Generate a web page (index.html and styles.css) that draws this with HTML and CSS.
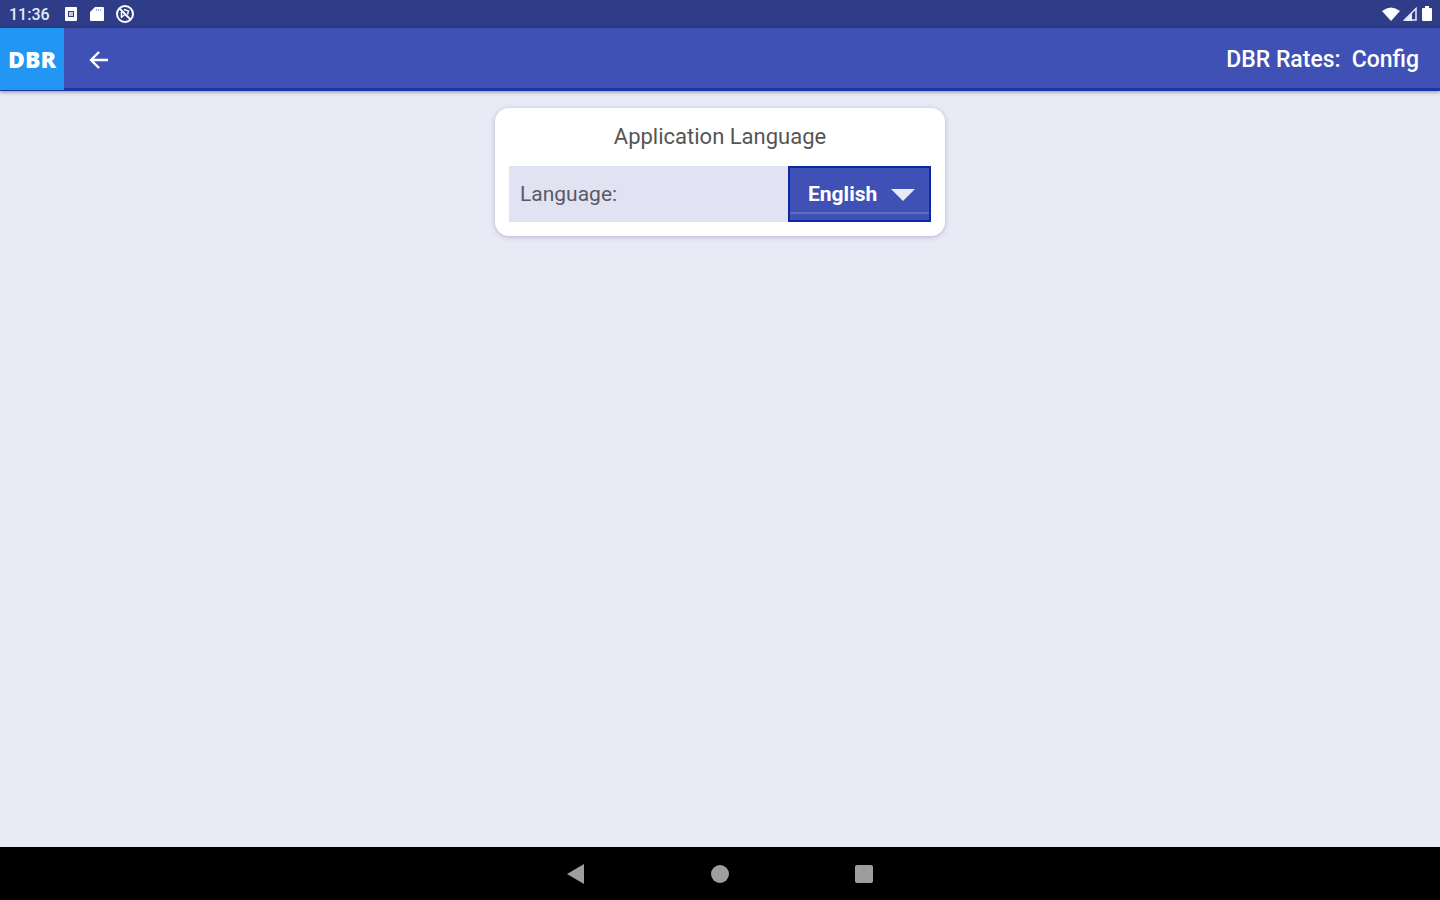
FILE: index.html
```html
<!DOCTYPE html>
<html lang="en">
<head>
    <meta charset="UTF-8">
    <meta name="viewport" content="width=device-width, initial-scale=1.0">
    <title>DBR Rates: Config</title>
    <link rel="stylesheet" href="styles.css">
</head>
<body>
    <div class="statusbar">
        <span class="clock">11:36</span>
        <div class="notifications">
            <svg width="14" height="16" viewBox="0 0 14 16"><path fill="#fff" fill-rule="evenodd" d="M2 1h10q1 0 1 1v12q0 1-1 1H2q-1 0-1-1V2q0-1 1-1zM4 5v6h6V5z"/><path fill="#c5cae9" d="M5 6h4v4H5z"/></svg>
            <svg width="14" height="16" viewBox="0 0 14 16"><path fill="#fff" d="M5 1h8q1 0 1 1v12q0 1-1 1H1q-1 0-1-1V6z"/><path stroke="#9fa8da" d="M6.500 3v2M8.500 3v2M10.500 3v2"/></svg>
            <svg width="18" height="18" viewBox="0 0 18 18" fill="none" stroke="#fff"><circle cx="9" cy="9" r="8" stroke-width="2"/><path stroke-width="2" d="M3.500 3.500l11 11"/><path stroke-width="1.500" d="M5.500 7v6M5.500 12l3-2M8 4.500l4.500 1.500-1 3.500"/></svg>
        </div>
        <div class="signals">
            <svg width="18" height="16" viewBox="0 0 18 16"><path fill="#fff" d="M0 5Q9-2 18 5L9 15z"/></svg>
            <svg width="15" height="16" viewBox="0 0 15 16"><path fill="none" stroke="#e8eaf6" stroke-width="1.500" d="M1.500 14L13 2.500V14z"/><path fill="#e8eaf6" d="M1 15L9 7v8z"/></svg>
            <svg width="12" height="16" viewBox="0 0 12 16"><path fill="#fff" d="M4 0h4v2h2q1 0 1 1v11q0 1-1 1H2q-1 0-1-1V3q0-1 1-1h2z"/></svg>
        </div>
    </div>
    <header class="toolbar">
        <div class="logo">DBR</div>
        <button class="back" type="button" aria-label="Back">
            <svg width="20" height="20" viewBox="0 0 20 20" fill="none" stroke="#fff" stroke-width="2.400"><path d="M19 10H3M10 2l-8 8 8 8"/></svg>
        </button>
        <h1 class="title"><span>DBR Rates:</span><span>Config</span></h1>
    </header>
    <main class="content">
        <section class="card">
            <h2>Application Language</h2>
            <div class="row">
                <label for="language">Language:</label>
                <div class="dropdown">
                    <select id="language">
                        <option selected>English</option>
                    </select>
                    <svg class="caret" width="24" height="12" viewBox="0 0 24 12"><path fill="#e8eaf6" d="M0 0h24L12 12z"/></svg>
                </div>
            </div>
        </section>
    </main>
    <nav class="navbar">
        <button type="button" aria-label="Back"><svg width="20" height="20" viewBox="0 0 20 20"><path fill="#9e9e9e" d="M18 0v20L1 10z"/></svg></button>
        <button type="button" aria-label="Home"><svg width="20" height="20" viewBox="0 0 20 20"><circle cx="10" cy="10" r="9" fill="#9e9e9e"/></svg></button>
        <button type="button" aria-label="Recent apps"><svg width="20" height="20" viewBox="0 0 20 20"><rect x="1" y="1" width="18" height="18" rx="2" fill="#9e9e9e"/></svg></button>
    </nav>
</body>
</html>
```

FILE: styles.css
```css
* {
    box-sizing: border-box;
}
body {
    margin: 0;
    min-height: 100vh;
    display: flex;
    flex-direction: column;
    font-family: Roboto, sans-serif;
    background-color: #e8eaf6;
}
button {
    border: none;
    padding: 0;
    background: none;
    cursor: pointer;
}
svg {
    display: block;
}
.statusbar {
    height: 28px;
    padding: 0 7px 0 9px;
    display: flex;
    align-items: center;
    background-color: #2f3d89;
    color: #e8eaf6;
}
.clock {
    font-size: 16px;
    font-weight: 500;
}
.notifications {
    display: flex;
    align-items: center;
    gap: 12px;
    margin-left: 14px;
}
.signals {
    display: flex;
    align-items: center;
    gap: 3px;
    margin-left: auto;
}
.toolbar {
    height: 63px;
    display: flex;
    align-items: center;
    background-color: #3f51b5;
    box-shadow: inset 0 -3px #1a35a5, 0 1px 4px rgba(0, 0, 0, 0.4);
    color: #fff;
}
.logo {
    width: 64px;
    height: 62px;
    align-self: flex-start;
    display: flex;
    justify-content: center;
    align-items: center;
    background-color: #2196f3;
    font-family: "Open Sans", sans-serif;
    font-size: 23px;
    font-weight: 800;
}
.back {
    padding: 8px;
    margin-left: 17px;
}
.title {
    display: flex;
    gap: 11px;
    margin: 0 21px 0 auto;
    font-size: 23px;
    font-weight: 500;
}
.content {
    flex: 1;
    padding: 17px 16px;
}
.card {
    max-width: 450px;
    margin: 0 auto;
    padding: 14px;
    background-color: #fff;
    border-radius: 14px;
    box-shadow: 0 1px 5px rgba(60, 60, 110, 0.3);
}
.card h2 {
    margin: 0 0 14px;
    font-size: 22px;
    line-height: 30px;
    font-weight: 400;
    text-align: center;
    color: #555;
}
.row {
    display: flex;
    align-items: center;
    height: 56px;
    background-color: #e1e3f3;
}
.row label {
    flex: 1;
    padding-left: 11px;
    font-size: 21px;
    color: #5a5a66;
}
.dropdown {
    position: relative;
    width: 143px;
    height: 56px;
}
.dropdown select {
    appearance: none;
    width: 100%;
    height: 100%;
    padding: 0 40px 0 18px;
    border: 2px solid #0d27a5;
    border-radius: 0;
    background: linear-gradient(#5c6bc0, #5c6bc0) 0 44px / 100% 2px no-repeat #3f51b5;
    color: #fff;
    font-family: Roboto, sans-serif;
    font-size: 21px;
    font-weight: 700;
}
.caret {
    position: absolute;
    top: 23px;
    right: 16px;
    pointer-events: none;
}
.navbar {
    height: 53px;
    display: flex;
    justify-content: center;
    align-items: center;
    gap: 124px;
    background-color: #000;
}
```
